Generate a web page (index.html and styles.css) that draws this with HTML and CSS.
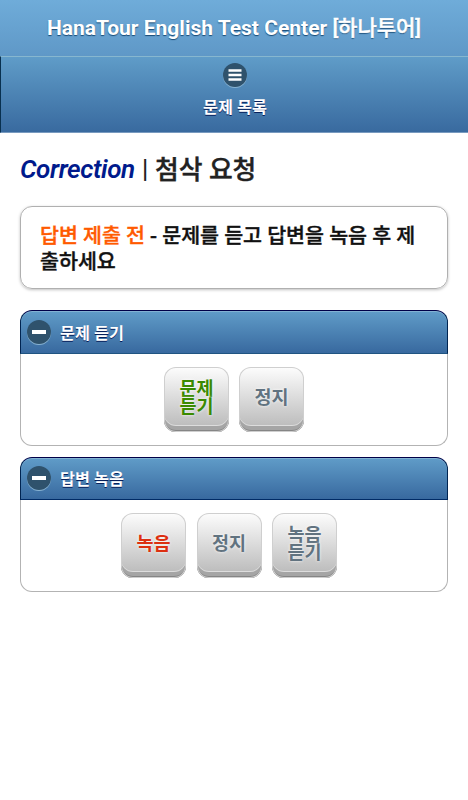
FILE: index.html
```html
<!DOCTYPE html>
<html lang="ko">
<head>
	<meta charset="UTF-8">
	<meta name="viewport" content="width=device-width, initial-scale=1.0">
	<title>HanaTour English Test Center</title>
	<link rel="stylesheet" href="styles.css">
</head>
<body>
	<div class="header">
		<h1>HanaTour English Test Center <span class="company">[하나투어]</span></h1>
	</div>
	<div class="navbar">
		<svg class="icon" viewBox="0 0 24 24">
			<path d="M5.5 7.5h13M5.5 12h13M5.5 16.5h13"/>
		</svg>
		<span class="nav-text">문제 목록</span>
	</div>

	<div class="content">
		<h2><em>Correction</em><span class="bar">|</span><span class="sub">첨삭 요청</span></h2>

		<div class="notice">
			<span class="state">답변 제출 전</span> - 문제를 듣고 답변을 녹음 후 제<br>출하세요
		</div>

		<div class="panel listen">
			<div class="panel-head">
				<svg class="icon" viewBox="0 0 24 24">
					<path class="minus" d="M5 12h14"/>
				</svg>
				<span>문제 듣기</span>
			</div>
			<div class="panel-body">
				<button class="key green">문제<br>듣기</button>
				<button class="key">정지</button>
			</div>
		</div>

		<div class="panel record">
			<div class="panel-head">
				<svg class="icon" viewBox="0 0 24 24">
					<path class="minus" d="M5 12h14"/>
				</svg>
				<span>답변 녹음</span>
			</div>
			<div class="panel-body">
				<button class="key red">녹음</button>
				<button class="key">정지</button>
				<button class="key">녹음<br>듣기</button>
			</div>
		</div>
	</div>
</body>
</html>
```

FILE: styles.css
```css
* {
	box-sizing: border-box;
}
body {
	margin: 0;
	background: #fff;
	color: #111;
	font-family: Roboto, "Noto Sans CJK KR", sans-serif;
}
.header {
	height: 56px;
	background: linear-gradient(#6facd9, #5f98c7);
}
h1 {
	margin: 0;
	font-size: 21px;
	line-height: 57px;
	font-weight: 700;
	text-align: center;
	white-space: nowrap;
	color: #fff;
	text-shadow: 0 1px 1px #174a75;
}
.company {
	font-weight: 500;
	-webkit-text-stroke: 0.5px #fff;
}
.navbar {
	height: 77px;
	padding: 6px 0 0 1px;
	display: flex;
	flex-direction: column;
	align-items: center;
	border-top: 1px solid #87b7cf;
	border-left: 1px solid #08304f;
	border-bottom: 1px solid #789abf;
	background: linear-gradient(#5f9cc8, #396a9f);
}
.icon {
	width: 24px;
	height: 24px;
	border-radius: 50%;
	background: #2f526c;
	box-shadow: 0 1px 0 #88b3d2;
	fill: none;
	stroke: #fff;
	stroke-width: 2.6;
}
.minus {
	stroke-width: 4;
}
.nav-text {
	margin-top: 9px;
	font-size: 16.3px;
	line-height: 24px;
	font-weight: 700;
	color: #fff;
	text-shadow: 0 1px 0 #05205c;
}
.content {
	padding: 17px 20px 0;
}
h2 {
	display: flex;
	align-items: center;
	height: 38px;
	margin: 0 0 18px;
	font-size: 25px;
	font-weight: 500;
	color: #222;
}
h2 em {
	width: 115px;
	font-size: 26px;
	font-weight: 600;
	letter-spacing: -0.4px;
	color: #001a8c;
	white-space: nowrap;
}
.bar {
	width: 20px;
	text-align: center;
}
.sub {
	margin-top: -4px;
	font-size: 25.8px;
	-webkit-text-stroke: 0.4px #222;
}
.notice {
	height: 83px;
	padding: 16px 0 0 19px;
	border: 1px solid #b0b0b0;
	border-radius: 12px;
	box-shadow: 0 1px 3px rgba(0, 0, 0, 0.25);
	font-size: 20.6px;
	line-height: 26px;
	font-weight: 500;
	white-space: nowrap;
	-webkit-text-stroke: 0.4px;
}
.state {
	color: #ff5a00;
}
.panel {
	border-radius: 12px;
}
.listen {
	margin-top: 21px;
}
.record {
	margin-top: 11px;
}
.panel-head {
	height: 44px;
	padding: 0 0 1px 6px;
	display: flex;
	align-items: center;
	gap: 9px;
	border: 1px solid #002451;
	border-top-color: #000047;
	border-bottom-color: #205481;
	border-radius: 12px 12px 0 0;
	background: linear-gradient(#609cc8, #38699f);
	box-shadow: inset 0 1px 0 #82b2d3;
	font-size: 16.3px;
	font-weight: 700;
	color: #fff;
	text-shadow: 0 1px 0 #05205c;
}
.record .panel-head {
	height: 43px;
	border-bottom-color: #002b66;
}
.panel-body {
	height: 92px;
	padding-top: 13px;
	display: flex;
	justify-content: center;
	gap: 10px;
	border: 1px solid #b3b3b3;
	border-top: 0;
	border-radius: 0 0 12px 12px;
}
.record .panel-body {
	gap: 10.5px;
	padding-right: 10px;
}
.key {
	width: 65px;
	height: 65px;
	padding: 0 0 3px;
	border: 0;
	border-radius: 12px;
	background: linear-gradient(#fdfdfd, #bdbdbd 90%);
	box-shadow: inset 0 0 0 1px #cfcfcf, inset 0 -2px 0 #858585, inset 0 -6px 0 #a5a5a5, inset 0 -7px 0 #ddd;
	font-family: inherit;
	font-size: 18.5px;
	line-height: 18px;
	font-weight: 700;
	color: #617380;
	text-shadow: 0 0 3px #fff;
}
.green {
	color: #3b8a00;
}
.red {
	color: #dc3011;
}
```
